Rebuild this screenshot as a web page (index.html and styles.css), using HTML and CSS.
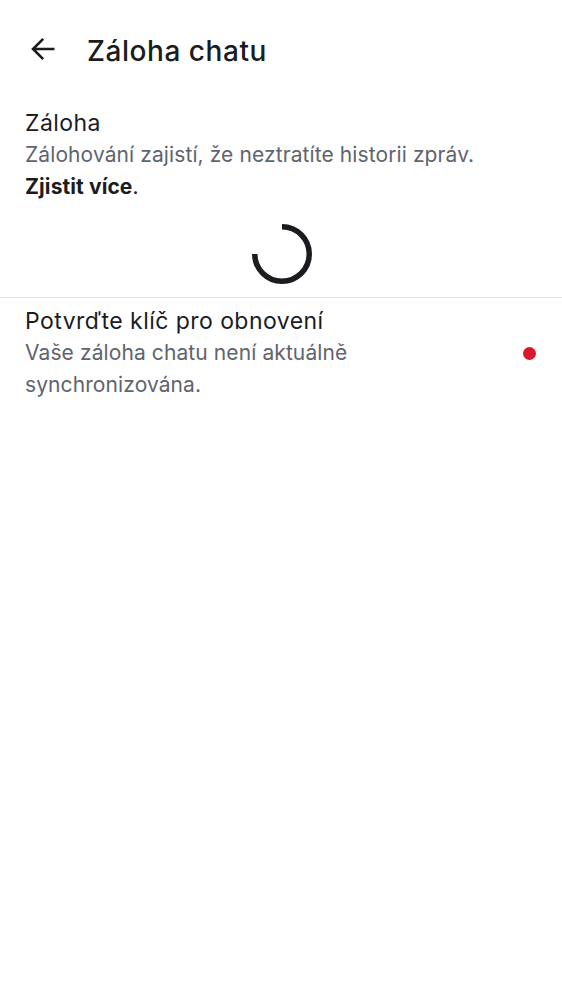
FILE: index.html
```html
<!DOCTYPE html>
<html lang="cs">
<head>
<meta charset="utf-8">
<link rel="stylesheet" href="styles.css">
</head>
<body>
<div class="screen">
  <header class="toolbar">
    <button class="back" aria-label="Zpět">
      <svg width="24" height="24" viewBox="0 0 24 24" aria-hidden="true">
        <path d="M23.5 12H2 M12.2 1.8L2 12l10.2 10.2" fill="none" stroke="#1b1c1f" stroke-width="2.6"/>
      </svg>
    </button>
    <h1 class="toolbar-title">Záloha chatu</h1>
  </header>

  <section class="backup">
    <div class="item-title">Záloha</div>
    <p class="item-sub">Zálohování zajistí, že neztratíte historii zpráv.<br><strong class="more">Zjistit více</strong><span class="dot-end">.</span></p>
    <div class="spinner-wrap">
      <svg class="spinner" width="60" height="60" viewBox="0 0 60 60" aria-hidden="true">
        <path d="M30 2.75 A27.25 27.25 0 1 1 2.75 30" fill="none" stroke="#1b1c1f" stroke-width="5.5"/>
      </svg>
    </div>
  </section>

  <div class="divider"></div>

  <section class="row">
    <div class="row-text">
      <div class="item-title">Potvrďte klíč pro obnovení</div>
      <p class="item-sub">Vaše záloha chatu není aktuálně synchronizována.</p>
    </div>
    <span class="badge"></span>
  </section>
</div>
</body>
</html>
```

FILE: styles.css
```css
html, body {
  margin: 0;
  padding: 0;
  background: #ffffff;
}

body {
  font-family: Inter, Roboto, "Noto Sans", Arial, sans-serif;
  color: #1b1c1f;
}

.screen {
  width: 562px;
  min-height: 1000px;
}

.toolbar {
  height: 102px;
  display: flex;
  align-items: center;
  padding-left: 31px;
}

.back {
  width: 24px;
  height: 24px;
  padding: 0;
  border: 0;
  background: none;
  display: flex;
  margin-right: 32px;
  margin-bottom: 4px;
}

.toolbar-title {
  margin: 0;
  font-size: 28px;
  font-weight: 500;
  line-height: 36px;
  letter-spacing: 0.55px;
  color: #1b1c1f;
}

.backup {
  padding: 5px 25px 0;
}

.item-title {
  font-size: 23px;
  line-height: 32px;
  letter-spacing: 0.45px;
  color: #1b1c1f;
}

.item-sub {
  margin: 0;
  font-size: 21px;
  line-height: 32px;
  letter-spacing: 0.1px;
  color: #60646e;
}

.more {
  font-weight: 700;
  color: #1b1c1f;
}

.dot-end {
  color: #1b1c1f;
}

.spinner-wrap {
  display: flex;
  justify-content: center;
  padding: 21px 0 13px;
}

.spinner {
  display: block;
  margin-left: 1px;
}

.divider {
  height: 1px;
  background: #e3e3e6;
}

.row {
  display: flex;
  align-items: center;
  padding: 7px 25px 0;
}

.row-text {
  flex: 1;
  padding-right: 20px;
}

.badge {
  width: 13px;
  height: 13px;
  border-radius: 50%;
  background: #d9182b;
  margin-right: 1px;
}
```
